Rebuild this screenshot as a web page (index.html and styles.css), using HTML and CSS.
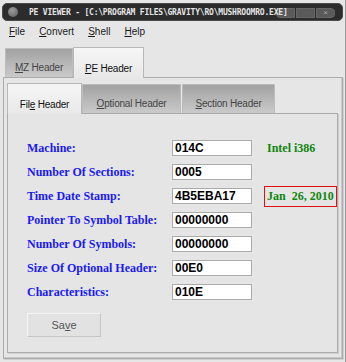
FILE: index.html
```html
<!DOCTYPE html>
<html lang="en">
<head>
  <meta charset="UTF-8">
  <title>PE Viewer</title>
  <link rel="stylesheet" href="styles.css">
</head>
<body>

  <div class="window">
    <div class="titlebar">
      <span class="dot"></span>
      <span class="title">PE VIEWER - [C:\PROGRAM FILES\GRAVITY\RO\MUSHROOMRO.EXE]</span>
      <div class="controls">
        <span class="ctl"></span>
        <span class="ctl"></span>
        <span class="ctl close">×</span>
      </div>
    </div>

    <div class="menubar">
      <span><u>F</u>ile</span>
      <span><u>C</u>onvert</span>
      <span><u>S</u>hell</span>
      <span><u>H</u>elp</span>
    </div>

    <div class="tabs outer-tabs">
      <div class="tab"><span><u>M</u>Z Header</span></div>
      <div class="tab active"><span><u>P</u>E Header</span></div>
    </div>

    <div class="panel outer-panel">
      <div class="tabs inner-tabs">
        <div class="tab active file-tab"><span>Fil<u>e</u> Header</span></div>
        <div class="tab opt-tab"><span><u>O</u>ptional Header</span></div>
        <div class="tab sec-tab"><span><u>S</u>ection Header</span></div>
      </div>

      <div class="panel inner-panel">
        <div class="fields">
          <label>Machine:</label>
          <input class="value" type="text" value="014C" readonly>
          <span class="info">Intel i386</span>

          <label>Number Of Sections:</label>
          <input class="value" type="text" value="0005" readonly>
          <span></span>

          <label>Time Date Stamp:</label>
          <input class="value" type="text" value="4B5EBA17" readonly>
          <span class="info flag">Jan&nbsp; 26, 2010</span>

          <label>Pointer To Symbol Table:</label>
          <input class="value" type="text" value="00000000" readonly>
          <span></span>

          <label>Number Of Symbols:</label>
          <input class="value" type="text" value="00000000" readonly>
          <span></span>

          <label>Size Of Optional Header:</label>
          <input class="value" type="text" value="00E0" readonly>
          <span></span>

          <label>Characteristics:</label>
          <input class="value" type="text" value="010E" readonly>
          <span></span>
        </div>

        <button class="save">Sa<u>v</u>e</button>
      </div>
    </div>
  </div>

</body>
</html>
```

FILE: styles.css
```css
body {
  margin: 0;
  background: #d9d9d9;
  font-family: "Liberation Sans", Arial, sans-serif;
}

.window {
  width: 346px;
  height: 362px;
  box-sizing: border-box;
  padding-top: 3px;
  background: #e6e6e6;
  border-right: 1px solid #9a9a9a;
}

/* title bar */
.titlebar {
  position: relative;
  display: flex;
  align-items: center;
  height: 18px;
  margin: 0 2px 0 2px;
  box-sizing: border-box;
  background: #2c2c2c;
  border: 1px solid #4a4a4a;
  border-radius: 5px;
}

.dot {
  width: 10px;
  height: 10px;
  margin-left: 5px;
  border-radius: 50%;
  background: radial-gradient(circle at 40% 35%, #9a9a9a, #5e5e5e);
}

.title {
  position: relative;
  z-index: 1;
  margin-left: 11px;
  font-family: "DejaVu Sans Mono", monospace;
  font-weight: bold;
  font-size: 8px;
  letter-spacing: -0.2px;
  color: #e4e4e4;
  white-space: nowrap;
}

.controls {
  position: absolute;
  top: 4px;
  right: 7px;
  display: flex;
  gap: 1px;
}

.ctl {
  width: 19px;
  height: 10px;
  background: #5a5a5a;
  border: 1px solid #666;
  box-sizing: border-box;
}

.ctl:first-child {
  border-radius: 4px 0 0 4px;
}

.close {
  border-radius: 0 4px 4px 0;
  color: #aaa;
  font-size: 8px;
  line-height: 8px;
  text-align: center;
}

/* menu */
.menubar {
  display: flex;
  gap: 14px;
  height: 21px;
  align-items: center;
  padding-left: 9px;
  font-size: 10px;
  color: #1a1a1a;
}

/* tabs */
.tabs {
  display: flex;
  align-items: flex-end;
}

.tab {
  display: flex;
  align-items: flex-end;
  justify-content: center;
  box-sizing: border-box;
  height: 29px;
  padding-bottom: 4px;
  font-size: 10px;
  letter-spacing: -0.2px;
  color: #444;
  background: linear-gradient(#a2a2a2, #cacaca);
  border: 1px solid #bcbcbc;
  border-bottom: none;
}

.tab.active {
  height: 31px;
  margin-bottom: -1px;
  padding-bottom: 4px;
  color: #111;
  background: linear-gradient(#f6f6f6, #e8e8e8);
  border-color: #b8b8b8;
  position: relative;
}

.outer-tabs {
  height: 30px;
  margin-top: 5px;
  padding-left: 5px;
}

.outer-tabs .tab {
  width: 68px;
}

.outer-tabs .tab.active {
  width: 71px;
}

.panel {
  box-sizing: border-box;
  border: 1px solid #ababab;
}

.outer-panel {
  height: 282px;
  margin: 0 2px 0 3px;
  padding: 5px 4px 0 3px;
  box-shadow: 1px 1px 0 #cfcfcf, inset -1px -1px 0 #c9c9c9;
}

.inner-tabs {
  height: 30px;
}

.file-tab {
  width: 75px;
}

.opt-tab {
  width: 99px;
}

.sec-tab {
  width: 93px;
  margin-left: 1px;
}

.inner-panel {
  height: 240px;
  padding: 22px 0 0 19px;
  background: #e5e5e5;
  box-shadow: 1px 1px 0 #cfcfcf;
}

/* fields */
.fields {
  display: grid;
  grid-template-columns: 145px 80px auto;
  grid-auto-rows: 24px;
  align-items: center;
}

.fields label {
  font-family: "Liberation Serif", "Times New Roman", serif;
  font-weight: bold;
  font-size: 12px;
  color: #1a1af2;
}

.value {
  width: 80px;
  height: 16px;
  box-sizing: border-box;
  margin: 0;
  padding: 0 0 0 2px;
  border: 1px solid #a9a9a9;
  background: #fff;
  font-family: "Liberation Sans", Arial, sans-serif;
  font-weight: bold;
  font-size: 12px;
  color: #000;
  outline: none;
}

.info {
  justify-self: start;
  margin-left: 12px;
  padding: 2px 2px;
  border: 1px solid transparent;
  font-family: "Liberation Serif", "Times New Roman", serif;
  font-weight: bold;
  font-size: 12px;
  line-height: 15px;
  color: #118511;
  white-space: nowrap;
}

.info.flag {
  border-color: #e01010;
}

.save {
  width: 74px;
  height: 24px;
  margin-top: 9px;
  padding: 0;
  background: #e2e2e2;
  border: 1px solid;
  border-color: #f4f4f4 #c6c6c6 #c6c6c6 #f4f4f4;
  font-family: "Liberation Sans", Arial, sans-serif;
  font-size: 11px;
  color: #555;
}
```
